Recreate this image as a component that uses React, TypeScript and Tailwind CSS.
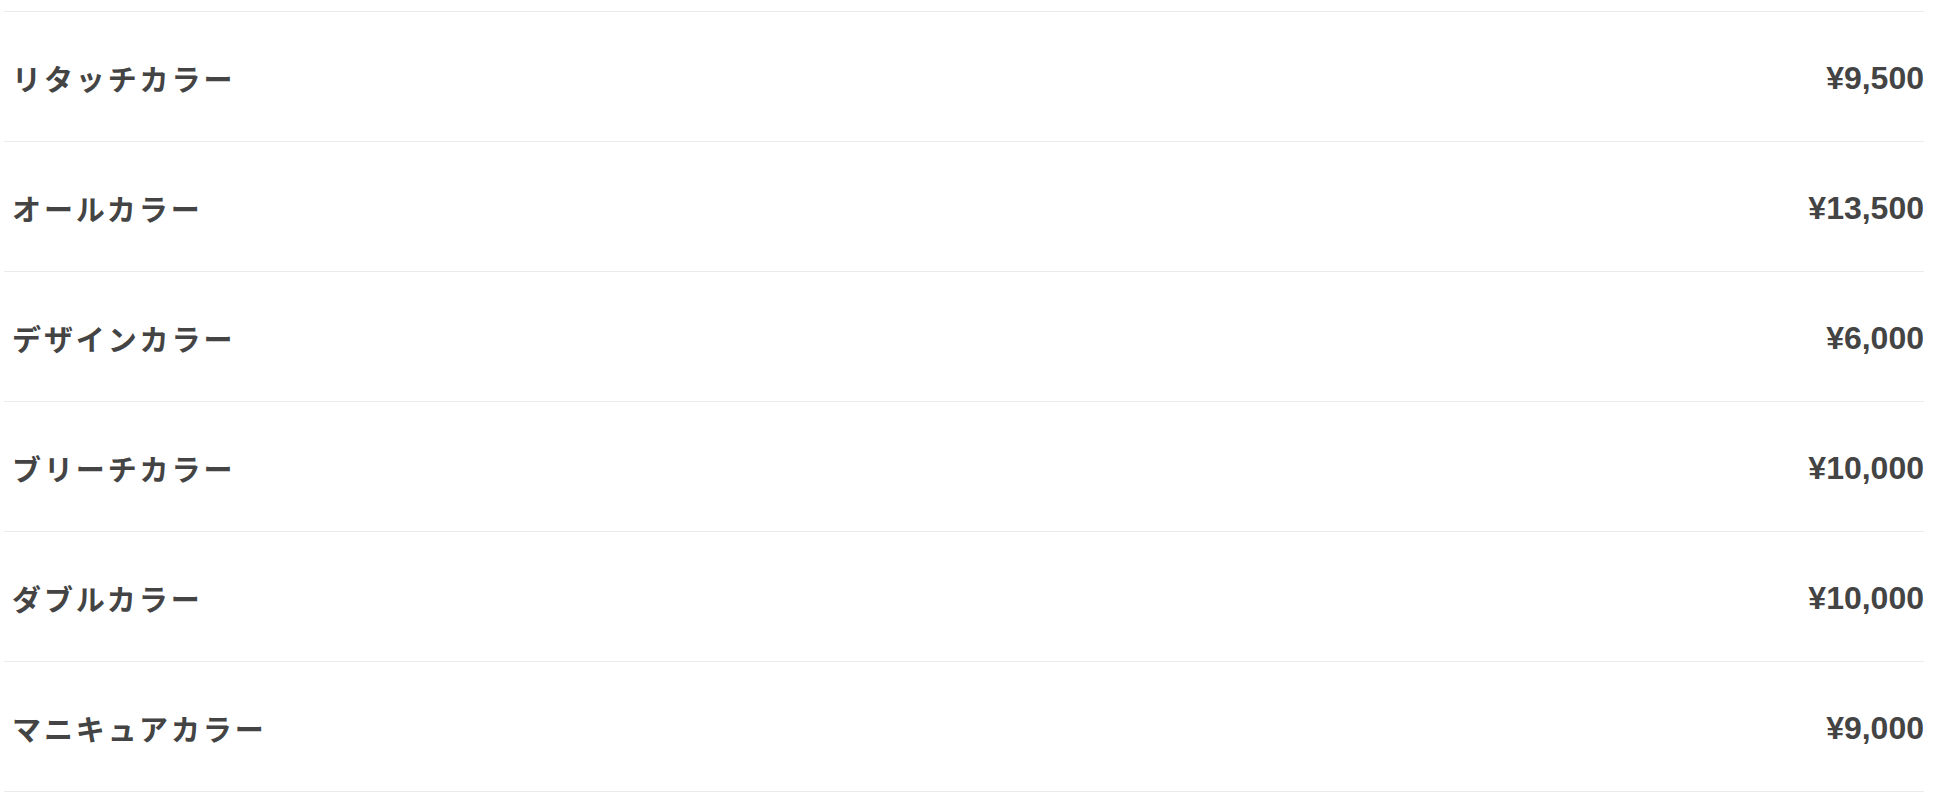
const menu = [
  { name: "リタッチカラー", price: "¥9,500" },
  { name: "オールカラー", price: "¥13,500" },
  { name: "デザインカラー", price: "¥6,000" },
  { name: "ブリーチカラー", price: "¥10,000" },
  { name: "ダブルカラー", price: "¥10,000" },
  { name: "マニキュアカラー", price: "¥9,000" },
];

export default function App() {
  return (
    <div className="min-h-[804px] w-full bg-white pt-[11px]">
      <ul className="ml-1 w-[1920px] border-t border-[#ebebeb]">
        {menu.map((item) => (
          <li
            key={item.name}
            className="flex h-[130px] items-center justify-between border-b border-[#ebebeb] pl-2 text-[#444444]"
          >
            <span className="pt-1 font-['Noto_Sans_CJK_JP',sans-serif] text-[29px] font-bold tracking-[0.1em]">
              {item.name}
            </span>
            <span className="pt-0.5 font-['Liberation_Sans',Arial,sans-serif] text-[32px] font-bold">
              {item.price}
            </span>
          </li>
        ))}
      </ul>
    </div>
  );
}
